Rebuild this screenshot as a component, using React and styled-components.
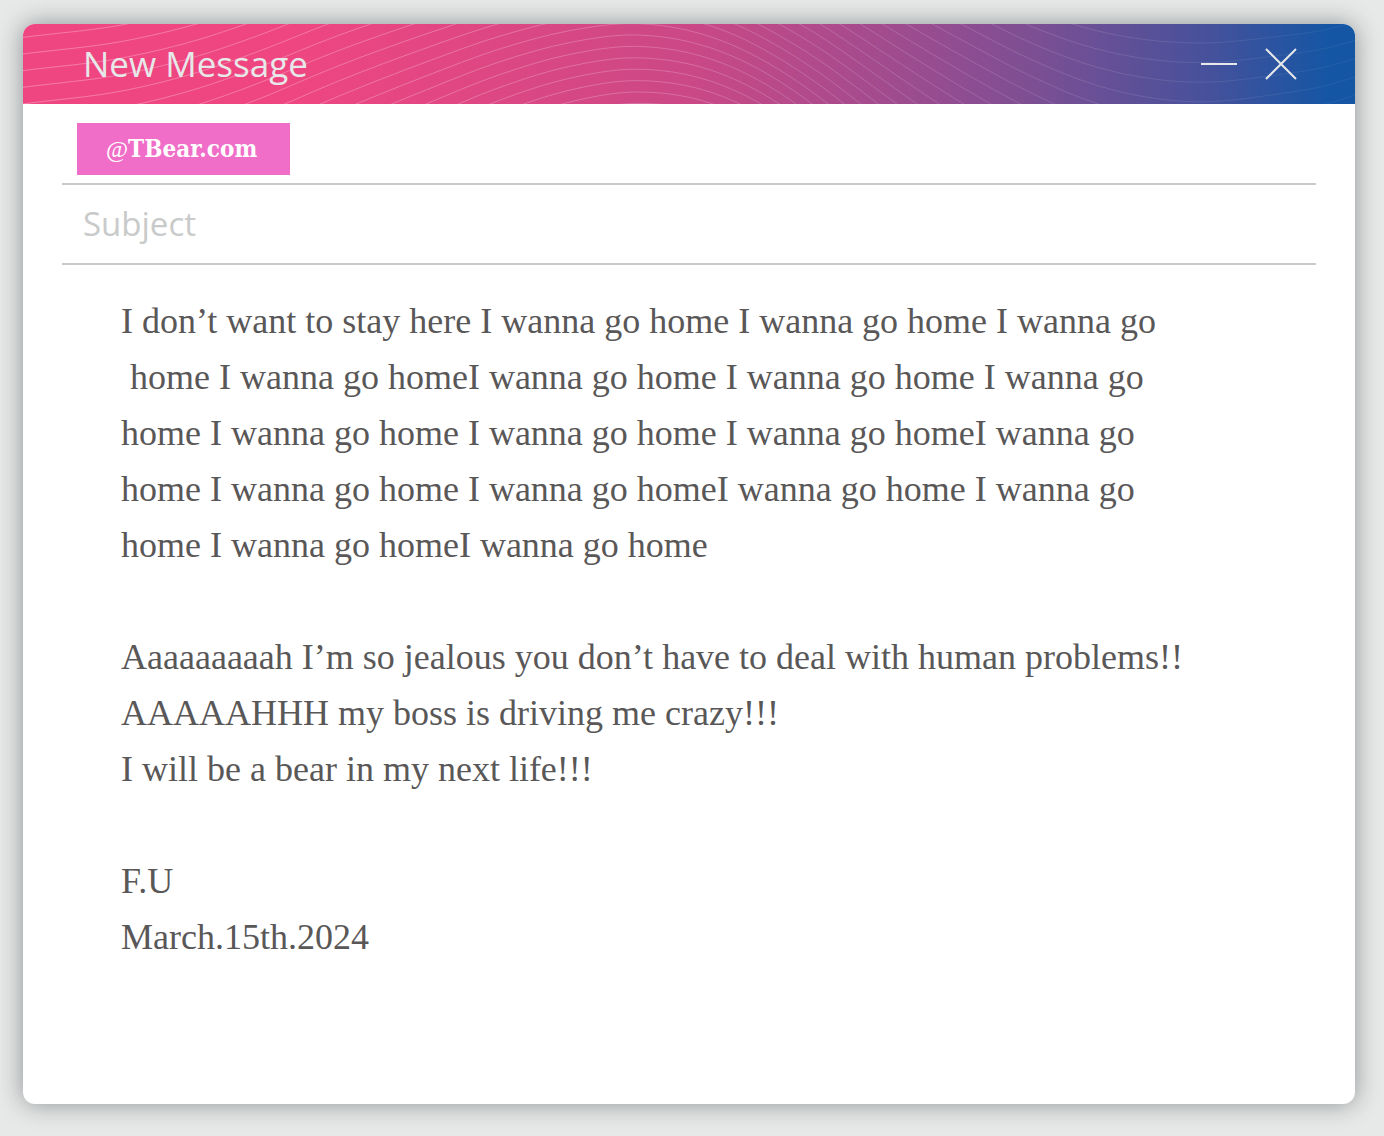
import React from "react";
import styled, { createGlobalStyle } from "styled-components";

const GlobalStyle = createGlobalStyle`
  *, *::before, *::after { box-sizing: border-box; }
  body { margin: 0; background: #e7e9e8; }
`;

const sans = `"Open Sans", "Noto Sans", sans-serif`;
const serif = `"Liberation Serif", "Times New Roman", serif`;

const Page = styled.main`
  display: flex;
  min-height: 100vh;
  padding: 24px 29px 32px 23px;
`;

const Window = styled.form`
  flex: 1;
  display: flex;
  flex-direction: column;
  min-width: 0;
  border-radius: 12px;
  background: #fff;
  box-shadow: 0 0 24px rgba(20, 24, 32, 0.42);
  overflow: hidden;
`;

const TitleBar = styled.header`
  position: relative;
  display: flex;
  align-items: center;
  justify-content: space-between;
  height: 80px;
  padding: 0 54px 0 60px;
  color: #e7e8e9;
  background: linear-gradient(
    90deg,
    #ef4681 20%,
    #cb4886 50%,
    #984c90 68%,
    #784f94 77%,
    #46519b 89%,
    #1556a4 98%
  );
`;

const Waves = styled.svg`
  position: absolute;
  inset: 0;
  width: 100%;
  height: 100%;
  fill: none;
`;

const Title = styled.h1`
  position: relative;
  margin: 0;
  font: 400 35px/48px ${sans};
`;

const Controls = styled.div`
  position: relative;
  display: flex;
  gap: 22px;
`;

const IconButton = styled.button`
  display: flex;
  padding: 0;
  border: 0;
  background: none;
  color: inherit;
  cursor: pointer;

  svg {
    width: 40px;
    height: 40px;
    fill: none;
    stroke: currentColor;
    stroke-width: 2;
  }
`;

const Fields = styled.div`
  padding: 1px 39px 0;
`;

const Field = styled.div`
  display: flex;
  align-items: ${(p) => p.$align || "stretch"};
  height: 80px;
  padding: ${(p) => p.$padding || "0"};
  border-bottom: 2px solid #c9caca;
`;

const Chip = styled.span`
  min-width: 213px;
  padding: 0 29px;
  background: #f06ec8;
  color: #fff;
  font: 700 24px/52px "DejaVu Serif Condensed", "DejaVu Serif", serif;
  font-stretch: condensed;
`;

const At = styled.span`
  font: 400 24px/52px ${serif};
`;

const SubjectInput = styled.input`
  flex: 1;
  min-width: 0;
  padding: 0 21px;
  border: 0;
  outline: 0;
  background: none;
  color: #595757;
  font: 400 33px/40px ${sans};

  &::placeholder {
    color: #c9caca;
    opacity: 1;
  }
`;

const Body = styled.textarea`
  flex: 1;
  display: block;
  width: 100%;
  min-height: 760px;
  padding: 28px 98px;
  border: 0;
  outline: 0;
  resize: none;
  background: none;
  color: #595757;
  font: 400 36px/56px ${serif};
`;

const message = `I don’t want to stay here I wanna go home I wanna go home I wanna go
 home I wanna go homeI wanna go home I wanna go home I wanna go
home I wanna go home I wanna go home I wanna go homeI wanna go
home I wanna go home I wanna go homeI wanna go home I wanna go
home I wanna go homeI wanna go home

Aaaaaaaaah I’m so jealous you don’t have to deal with human problems!!
AAAAAHHH my boss is driving me crazy!!!
I will be a bear in my next life!!!

F.U
March.15th.2024`;

// Each station is [x, height of line 0, spacing between neighbouring lines].
const stations = [
  [0, 196.5, 16.65], [104, 181.5, 16.5], [177, 161, 16.2], [223, 144, 16],
  [317, 102, 15.2], [403, 66, 14], [477, 37.7, 12.8], [547, 18.5, 11.9],
  [614, 11, 11.4], [712, 33.3, 11.1], [756, 57, 11.4],
  [797, 86, 12.3], [838, 120, 13.3], [884, 160, 14.5], [938, 204, 15.7],
  [1011, 254, 16.7], [1074, 298, 18.2], [1172, 332.6, 19.6],
  [1252, 320, 19.2], [1304, 303, 18.6], [1332, 291, 18.3],
];

function wavePath(k) {
  const pts = stations.map(([x, c, s]) => [x, c + k * s]);
  const last = pts.length - 1;
  const chord = (i) => (pts[i + 1][1] - pts[i][1]) / (pts[i + 1][0] - pts[i][0]);
  // Tangent of the parabola through a station and its two neighbours.
  const slope = (i) => {
    if (i === 0) return chord(0);
    if (i === last) return chord(last - 1);
    const before = pts[i][0] - pts[i - 1][0];
    const after = pts[i + 1][0] - pts[i][0];
    return (chord(i - 1) * after + chord(i) * before) / (before + after);
  };
  let d = `M${pts[0][0]} ${pts[0][1]}`;
  for (let i = 1; i <= last; i++) {
    const [x0, y0] = pts[i - 1];
    const [x1, y1] = pts[i];
    const h = (x1 - x0) / 3;
    d += `C${x0 + h} ${y0 + slope(i - 1) * h} ${x1 - h} ${y1 - slope(i) * h} ${x1} ${y1}`;
  }
  return d;
}

const waves = Array.from({ length: 24 }, (_, i) => wavePath(i - 17));

export default function App() {
  return (
    <>
      <GlobalStyle />
      <Page>
        <Window onSubmit={(e) => e.preventDefault()}>
          <TitleBar>
            <Waves viewBox="0 0 1332 80" preserveAspectRatio="none" aria-hidden="true">
              <defs>
                <linearGradient id="fade" gradientUnits="userSpaceOnUse" x1="0" y1="0" x2="1332" y2="0">
                  <stop offset="0" stopColor="#fff" stopOpacity="0.29" />
                  <stop offset="0.3" stopColor="#fff" stopOpacity="0.25" />
                  <stop offset="0.75" stopColor="#fff" stopOpacity="0.13" />
                  <stop offset="1" stopColor="#fff" stopOpacity="0.05" />
                </linearGradient>
              </defs>
              <g stroke="url(#fade)" strokeWidth="1">
                {waves.map((d) => <path key={d} d={d} />)}
              </g>
            </Waves>
            <Title>New Message</Title>
            <Controls>
              <IconButton type="button" aria-label="Minimize">
                <svg viewBox="0 0 40 40"><path d="M2 20H38" /></svg>
              </IconButton>
              <IconButton type="button" aria-label="Close">
                <svg viewBox="0 0 40 40"><path d="M5 5L35 35M35 5L5 35" /></svg>
              </IconButton>
            </Controls>
          </TitleBar>
          <Fields>
            <Field $align="flex-end" $padding="0 15px 8px">
              <Chip><At>@</At>TBear.com</Chip>
            </Field>
            <Field>
              <SubjectInput type="text" aria-label="Subject" placeholder="Subject" />
            </Field>
          </Fields>
          <Body aria-label="Message" defaultValue={message} spellCheck={false} />
        </Window>
      </Page>
    </>
  );
}
